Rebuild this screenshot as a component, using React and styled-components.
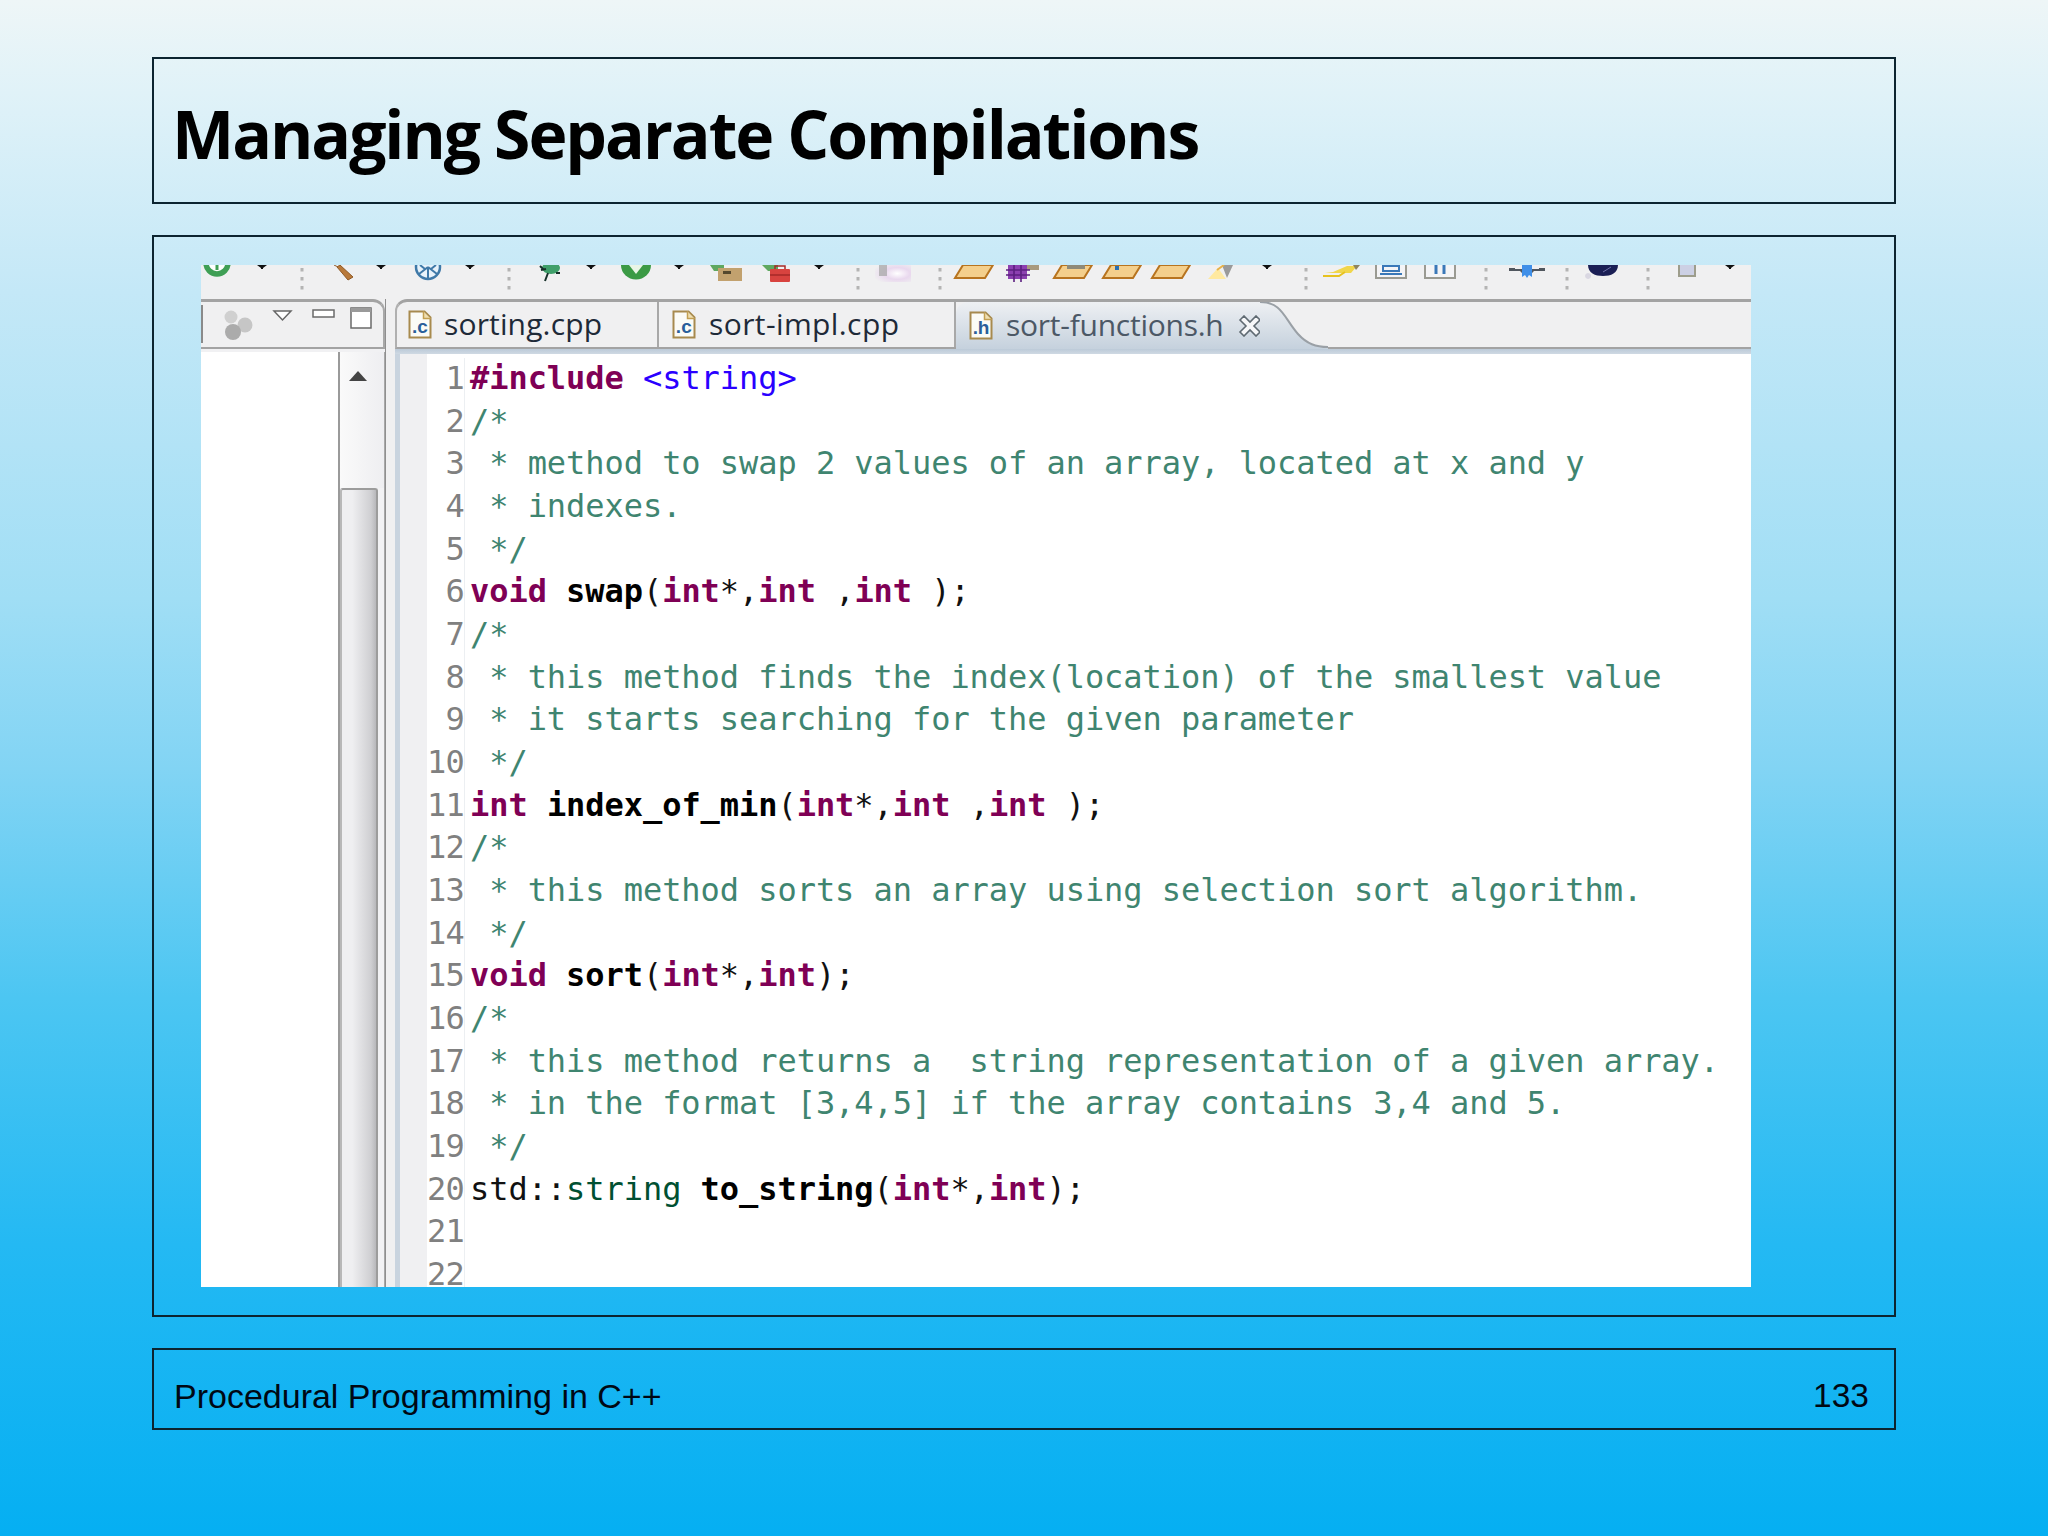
import React from 'react';
import styled, { createGlobalStyle } from 'styled-components';

const Global = createGlobalStyle`
  html, body { margin: 0; padding: 0; }
  body { width: 2048px; height: 1536px; overflow: hidden; }
`;

const Page = styled.div`
  width: 2048px; height: 1536px; box-sizing: border-box;
  padding: 57px 152px 0 152px;
  display: flex; flex-direction: column; gap: 31px;
  background: linear-gradient(180deg, #eef6f7 0%, #e0f2f8 6%, #c4e8f7 19%, #a0def5 39%, #82d4f4 50%, #4cc6f2 65%, #24b9f3 81%, #05aff2 100%);
`;
const Frame = styled.section`
  box-sizing: border-box; width: 1744px; height: ${p => p.$h}px;
  border: 2px solid #0c2430;
`;
const TitleFrame = styled(Frame)`
  display: flex; align-items: center; padding: 4px 0 0 18px;
`;
const Title = styled.h1`
  margin: 0; font: 700 66px/1 "Open Sans", sans-serif; color: #000; letter-spacing: -2.05px; white-space: nowrap;
`;
const MainFrame = styled(Frame)`
  padding: 28px 0 0 47px;
`;
const FooterFrame = styled(Frame)`
  display: flex; align-items: center; justify-content: space-between;
  padding: 14px 25px 0 20px;
  font: 400 34px/1 "Liberation Sans", Arial, sans-serif; color: #000814;
`;
const PageNo = styled.span`
  font-size: 33.5px;
`;
const Screen = styled.div`
  width: 1550px; height: 1022px; background: #f0f0f1; overflow: hidden;
  display: flex; flex-direction: column;
`;
const Toolbar = styled.div`
  height: 34px; flex: none; overflow: hidden;
`;
const Track = styled.div`
  display: flex; margin-left: -6px;
`;
const Slot = styled.div`
  flex: none; height: 34px;
`;
const Panes = styled.div`
  flex: 1; min-height: 0; display: grid; grid-template-columns: 184px 10px 1fr;
`;
const Pane = styled.div`
  display: flex; flex-direction: column; min-width: 0; min-height: 0;
`;
const Sash = styled.div`
  background: #f0f0f1; border-left: 1px solid #8f8f8f;
`;
const ViewBar = styled.div`
  height: 50px; flex: none; box-sizing: border-box; display: flex; align-items: flex-start;
  border-top: 3px solid #a3a3a3; border-right: 2px solid #a8a8a8; border-bottom: 2px solid #a3a3a3;
  border-top-right-radius: 12px; background: #f0f0f1;
`;
const LeftEdge = styled.div`
  width: 2px; height: 38px; margin-top: 3px; background: #8a8a8a;
`;
const OutlineBody = styled.div`
  flex: 1; display: flex; min-height: 0; border-top: 3px solid #f1f1f3;
`;
const Outline = styled.div`
  width: 137px; flex: none; background: #fff;
`;
const ScrollBar = styled.div`
  flex: 1; border-left: 2px solid #9a9a9a; border-right: 1px solid #a8a8a8; display: flex; flex-direction: column;
  background: #f2f2f4;
`;
const ScrollArrow = styled.div`
  height: 136px; flex: none; display: flex; justify-content: center; padding: 19px 8px 0 0; box-sizing: border-box;
  background: linear-gradient(90deg, #fafafa, #eeeef1);
`;
const Thumb = styled.div`
  flex: 1; width: 38px; box-sizing: border-box; border: 2px solid #9c9c9c; border-left-color: #b8b8b8; border-bottom: none;
  border-radius: 3px 3px 0 0;
  background: linear-gradient(90deg, #efeff1 0%, #efeff1 30%, #cfcfd2 85%, #b8b8bb 100%);
`;
const TabBar = styled.div`
  height: 50px; flex: none; box-sizing: border-box; display: flex; align-items: stretch;
  border-top: 3px solid #a3a3a3; border-bottom: 2px solid #a3a3a3; border-top-left-radius: 12px;
  border-left: 2px solid #b0b0b0;
  background: #f0f0f1;
`;
const Tab = styled.div`
  flex: none; box-sizing: border-box; width: ${p => p.$w}px; display: flex; align-items: center;
  padding-left: ${p => p.$pad}px; gap: ${p => p.$gap}px;
  margin-bottom: ${p => (p.$active ? -2 : 0)}px;
  font: 400 30px/1 "Open Sans", "Noto Sans", sans-serif; letter-spacing: ${p => p.$ls}px; white-space: nowrap;
  color: ${p => (p.$active ? '#4c5866' : '#1e2a38')};
  background: ${p => (p.$active ? 'linear-gradient(180deg, #eef0f3 0%, #c5d1dd 100%)' : 'transparent')};
  border-right: ${p => (p.$last ? 'none' : '2px solid #a8a8a8')};
  border-top-left-radius: 12px;
`;
const TabLabel = styled.span`
  display: block; transform: translateY(-1px);
`;
const Close = styled.svg`
  width: 24px; height: 22px; margin-left: 1px; flex: none;
`;
const EditorLine = styled.div`
  height: 5px; flex: none; background: linear-gradient(180deg, #bccad8, #cfd9e3);
`;
const Editor = styled.div`
  flex: 1; min-height: 0; overflow: hidden; display: flex; background: #fff;
  border-left: 5px solid #c9d4df;
`;
const Ruler = styled.div`
  width: 27px; flex: none; background: #f0f0f2;
`;
const Lines = styled.div`
  flex: 1; display: flex; flex-direction: column; padding-top: 4px;
`;
const Row = styled.div`
  display: flex; height: 42.68px; flex: none;
  font: 400 32px/41px "DejaVu Sans Mono", "Liberation Mono", monospace;
  letter-spacing: -0.05px; white-space: pre;
`;
const LineNo = styled.div`
  width: 38px; flex: none; text-align: right; color: #808080;
  border-right: 1px solid #eceff2; box-sizing: border-box; direction: rtl;
  letter-spacing: -0.8px;
`;
const Code = styled.div`
  padding-left: 5px;
`;
const Kw = styled.span` color: #7f0055; font-weight: 700; `;
const Fn = styled.span` color: #000; font-weight: 700; `;
const Cm = styled.span` color: #3f8570; `;
const St = styled.span` color: #2a00ff; `;
const Cl = styled.span` color: #005032; `;
const Pl = styled.span` color: #111; `;

const centers = [
  ['ring', 217], ['arrow', 262], ['dots', 302], ['hammer', 342], ['arrow', 381], ['wheel', 428], ['arrow', 470],
  ['dots', 509], ['bug', 548], ['arrow', 591], ['check', 636], ['arrow', 679], ['brief', 726], ['red', 778],
  ['arrow', 819], ['dots', 858], ['blur', 893], ['dots', 940], ['folder', 974], ['grid', 1021], ['folderG', 1073],
  ['folderB', 1122], ['folder', 1171], ['star', 1218], ['arrow', 1267], ['dots', 1306], ['pencil', 1341],
  ['boxA', 1391], ['boxB', 1440], ['dots', 1486], ['blue', 1527], ['dots', 1567], ['moon', 1603], ['dots', 1648],
  ['doc', 1687], ['arrow', 1730],
];

const Ico = ({ k }) => {
  const common = { width: 44, height: 34, viewBox: '0 0 44 34', style: { display: 'block', overflow: 'visible' } };
  switch (k) {
    case 'arrow':
      return <svg {...common}><path d="M17 0h10l-4 3v1h-2V3z" fill="#111" /></svg>;
    case 'dots':
      return <svg {...common}>{[3, 12, 21].map(y => <rect key={y} x="20.5" y={y} width="3" height="3.5" fill="#b4b4b4" />)}</svg>;
    case 'ring':
      return <svg {...common}><circle cx="22" cy="-2" r="11" fill="#fff" stroke="#3f9f55" strokeWidth="5.5" /><path d="M22 -2v7" stroke="#3f9f55" strokeWidth="3" /></svg>;
    case 'hammer':
      return <svg {...common}><path d="M14 0l4 2M20 0l13 12-5 3L17 2z" fill="#b9793a" stroke="#8f5a26" strokeWidth="1" /></svg>;
    case 'wheel':
      return <svg {...common}><circle cx="22" cy="2" r="12" fill="#e8f2fa" stroke="#3f79a8" strokeWidth="2.5" /><path d="M22 2v12M22 2l-9 7M22 2l9 7M14 0l5 4M30 0l-5 4" stroke="#3f79a8" strokeWidth="2" /></svg>;
    case 'bug':
      return <svg {...common}><ellipse cx="25" cy="3" rx="9" ry="6" fill="#3f9f6a" /><path d="M20 4l-5 1M22 8l-3 8M18 5l-4-4M30 8l4 0" stroke="#17302a" strokeWidth="2" fill="none" /></svg>;
    case 'check':
      return <svg {...common}><path d="M7 0h30a15 14.5 0 0 1-30 0z" fill="#3b9a45" /><path d="M15 0l7 9 7-9z" fill="#eaf5e6" /></svg>;
    case 'brief':
      return <svg {...common}><path d="M6 0h14v6H10z" fill="#5fa860" /><rect x="14" y="3" width="24" height="13" fill="#c2a16e" /><rect x="19" y="6" width="8" height="3" fill="#54482e" /></svg>;
    case 'red':
      return <svg {...common}><path d="M6 0h16v6H12z" fill="#5fa860" /><rect x="14" y="4" width="20" height="13" rx="1" fill="#d8433f" /><path d="M19 4V1h10v3M14 10h20" stroke="#a52a28" strokeWidth="1.5" fill="none" /></svg>;
    case 'blur':
      return <svg {...common}><defs><radialGradient id="bl" cx="0.62" cy="0.5" r="0.7"><stop offset="0" stopColor="#fff" /><stop offset="0.5" stopColor="#e9d8ee" /><stop offset="1" stopColor="#f0f0f1" /></radialGradient></defs><rect x="4" y="0" width="36" height="17" fill="url(#bl)" /><rect x="8" y="0" width="8" height="11" fill="#a8a8a8" opacity="0.75" /></svg>;
    case 'folder':
    case 'folderG':
    case 'folderB':
      return <svg {...common}><path d="M11 0h30l-8 13H3z" fill="#f4cf8c" stroke="#b8741f" strokeWidth="2" />{k === 'folderG' && <rect x="16" y="0" width="18" height="4" fill="#8f8a78" />}{k === 'folderB' && <rect x="15" y="1" width="4" height="4" fill="#2a6fb0" />}</svg>;
    case 'grid':
      return <svg {...common}><rect x="26" y="0" width="14" height="5" fill="#a89a7e" /><rect x="9" y="0" width="19" height="14" fill="#8c3fb0" /><path d="M15 0v17M22 0v17M7 5h24M7 10h24" stroke="#5c1f80" strokeWidth="1.6" /></svg>;
    case 'star':
      return <svg {...common}><path d="M26 0h11l-6 13z" fill="#9a9a9a" /><path d="M22 3l8 11H12z" fill="#ffe9a0" /><path d="M28 0l-7 5" stroke="#e8b34a" strokeWidth="2" /></svg>;
    case 'pencil':
      return <svg {...common}><path d="M28 1h10l-6 7H6l8-1z" fill="#f1d64b" /><path d="M4 11h16l6-4" stroke="#e7c21f" strokeWidth="2" fill="none" /><path d="M34 0h7l-4 5z" fill="#8f8560" /></svg>;
    case 'boxA':
      return <svg {...common}><path d="M7 0v13h30V0" fill="#f4f4f6" stroke="#9a9a92" strokeWidth="2" /><path d="M14 1h16v5H14z" fill="none" stroke="#3a78b8" strokeWidth="2" /><path d="M11 9h22" stroke="#3a78b8" strokeWidth="2" /></svg>;
    case 'boxB':
      return <svg {...common}><path d="M7 0v13h30V0" fill="#f4f4f6" stroke="#9a9a92" strokeWidth="2" /><path d="M18 0v9M26 0v9" stroke="#3a78b8" strokeWidth="3" /></svg>;
    case 'blue':
      return <svg {...common}><path d="M4 3v3h11l3 3h8l3-3h11V3h-6v1H10V3z" fill="#50565e" /><path d="M17 0h10v12l-3-2-2 3-2-3-3 2z" fill="#3f8fe8" /></svg>;
    case 'moon':
      return <svg {...common}><path d="M7 0h30c0 8-7 11-15 11S7 8 7 0z" fill="#1b1f55" /><path d="M7 8a3 3 0 1 0 .1 0" fill="#d9d7e2" /><path d="M22 7l8-5" stroke="#6f70a8" strokeWidth="1" /></svg>;
    case 'doc':
      return <svg {...common}><path d="M14 0v11h16V0" fill="#ccd0e4" stroke="#9d9d8c" strokeWidth="2" /></svg>;
    default:
      return null;
  }
};

const FileIcon = ({ letter }) => (
  <svg width="24" height="29" viewBox="0 0 24 29" style={{ flex: 'none' }}>
    <path d="M1.5 1.5h15l6 6v20h-21z" fill="#fbfbf6" stroke="#a78a4e" strokeWidth="2" />
    <path d="M15.5 1.5v7h7" fill="#f0dfb0" stroke="#c29f52" strokeWidth="1.5" />
    <text x="12" y="23" textAnchor="middle" fontFamily="Liberation Sans, sans-serif" fontWeight="700" fontSize="19" fill="#2a5f9a">{letter}</text>
  </svg>
);

const line = (...parts) => parts;
const code = [
  line(<Kw>#include</Kw>, ' ', <St>&lt;string&gt;</St>),
  line(<Cm>/*</Cm>),
  line(<Cm> * method to swap 2 values of an array, located at x and y</Cm>),
  line(<Cm> * indexes.</Cm>),
  line(<Cm> */</Cm>),
  line(<Kw>void</Kw>, ' ', <Fn>swap</Fn>, <Pl>(</Pl>, <Kw>int</Kw>, <Pl>*,</Pl>, <Kw>int</Kw>, <Pl> ,</Pl>, <Kw>int</Kw>, <Pl> );</Pl>),
  line(<Cm>/*</Cm>),
  line(<Cm> * this method finds the index(location) of the smallest value</Cm>),
  line(<Cm> * it starts searching for the given parameter</Cm>),
  line(<Cm> */</Cm>),
  line(<Kw>int</Kw>, ' ', <Fn>index_of_min</Fn>, <Pl>(</Pl>, <Kw>int</Kw>, <Pl>*,</Pl>, <Kw>int</Kw>, <Pl> ,</Pl>, <Kw>int</Kw>, <Pl> );</Pl>),
  line(<Cm>/*</Cm>),
  line(<Cm> * this method sorts an array using selection sort algorithm.</Cm>),
  line(<Cm> */</Cm>),
  line(<Kw>void</Kw>, ' ', <Fn>sort</Fn>, <Pl>(</Pl>, <Kw>int</Kw>, <Pl>*,</Pl>, <Kw>int</Kw>, <Pl>);</Pl>),
  line(<Cm>/*</Cm>),
  line(<Cm> * this method returns a  string representation of a given array.</Cm>),
  line(<Cm> * in the format [3,4,5] if the array contains 3,4 and 5.</Cm>),
  line(<Cm> */</Cm>),
  line(<Pl>std::</Pl>, <Cl>string</Cl>, ' ', <Fn>to_string</Fn>, <Pl>(</Pl>, <Kw>int</Kw>, <Pl>*,</Pl>, <Kw>int</Kw>, <Pl>);</Pl>),
  line(),
  line(),
];

const slots = centers.map(([k, c], i) => ({
  k,
  w: i === centers.length - 1 ? 44 : centers[i + 1][1] - c,
}));

export default function App() {
  return (
    <Page>
      <Global />
      <TitleFrame $h={147}>
        <Title>Managing Separate Compilations</Title>
      </TitleFrame>
      <MainFrame $h={1082}>
        <Screen>
          <Toolbar>
            <Track>
              {slots.map((s, i) => (
                <Slot key={i} style={{ width: s.w }}><Ico k={s.k} /></Slot>
              ))}
            </Track>
          </Toolbar>
          <Panes>
            <Pane>
              <ViewBar>
                <LeftEdge />
                <svg width="180" height="45" viewBox="0 0 180 45">
                  <circle cx="28" cy="15" r="6.5" fill="#d0d0d0" />
                  <circle cx="42" cy="23" r="7.5" fill="#c6c6c6" />
                  <circle cx="30" cy="30" r="8" fill="#ababab" />
                  <path d="M71 9h17l-8.5 9z" fill="#fff" stroke="#666" strokeWidth="1.5" />
                  <rect x="110" y="8" width="21" height="7" fill="#fff" stroke="#6a6a6a" strokeWidth="1.5" />
                  <rect x="148" y="6" width="20" height="20" fill="#fff" stroke="#6a6a6a" strokeWidth="1.5" />
                  <rect x="148" y="6" width="20" height="4" fill="#9a9a9a" />
                </svg>
              </ViewBar>
              <OutlineBody>
                <Outline />
                <ScrollBar>
                  <ScrollArrow>
                    <svg width="20" height="10" viewBox="0 0 20 10"><path d="M10 0l9 10H1z" fill="#444" /></svg>
                  </ScrollArrow>
                  <Thumb />
                </ScrollBar>
              </OutlineBody>
            </Pane>
            <Sash />
            <Pane>
              <TabBar>
                <Tab $w={262} $pad={11} $gap={12} $ls={0.15}><FileIcon letter=".c" /><TabLabel>sorting.cpp</TabLabel></Tab>
                <Tab $w={297} $pad={13} $gap={13} $ls={0.4}><FileIcon letter=".c" /><TabLabel>sort-impl.cpp</TabLabel></Tab>
                <Tab $active $last $w={304} $pad={13} $gap={13} $ls={-0.25}>
                  <FileIcon letter=".h" />
                  <TabLabel>sort-functions.h</TabLabel>
                  <Close viewBox="0 0 24 22">
                    <path d="M2 5l4-4 6 6 6-6 4 4-6 6 6 6-4 4-6-6-6 6-4-4 6-6z" fill="#f6f7f9" stroke="#5f6a72" strokeWidth="1.6" />
                  </Close>
                </Tab>
                <svg width="68" height="47" viewBox="0 0 68 47" style={{ flex: 'none', marginBottom: -2 }}>
                  <defs>
                    <linearGradient id="tl" x1="0" y1="0" x2="0" y2="1"><stop offset="0" stopColor="#eef0f3" /><stop offset="1" stopColor="#c5d1dd" /></linearGradient>
                  </defs>
                  <path d="M0 0C22 0 24 16 38 32C47 42 56 45 68 45V47H0z" fill="url(#tl)" />
                  <path d="M0 0C22 0 24 16 38 32C47 42 56 45 68 45" fill="none" stroke="#9aa0a6" strokeWidth="2" />
                </svg>
              </TabBar>
              <EditorLine />
              <Editor>
                <Ruler />
                <Lines>
                  {code.map((parts, i) => (
                    <Row key={i}>
                      <LineNo>{i + 1}</LineNo>
                      <Code>{parts.map((p, j) => <React.Fragment key={j}>{p}</React.Fragment>)}</Code>
                    </Row>
                  ))}
                </Lines>
              </Editor>
            </Pane>
          </Panes>
        </Screen>
      </MainFrame>
      <FooterFrame $h={82}>
        <span>Procedural Programming in C++</span>
        <PageNo>133</PageNo>
      </FooterFrame>
    </Page>
  );
}
